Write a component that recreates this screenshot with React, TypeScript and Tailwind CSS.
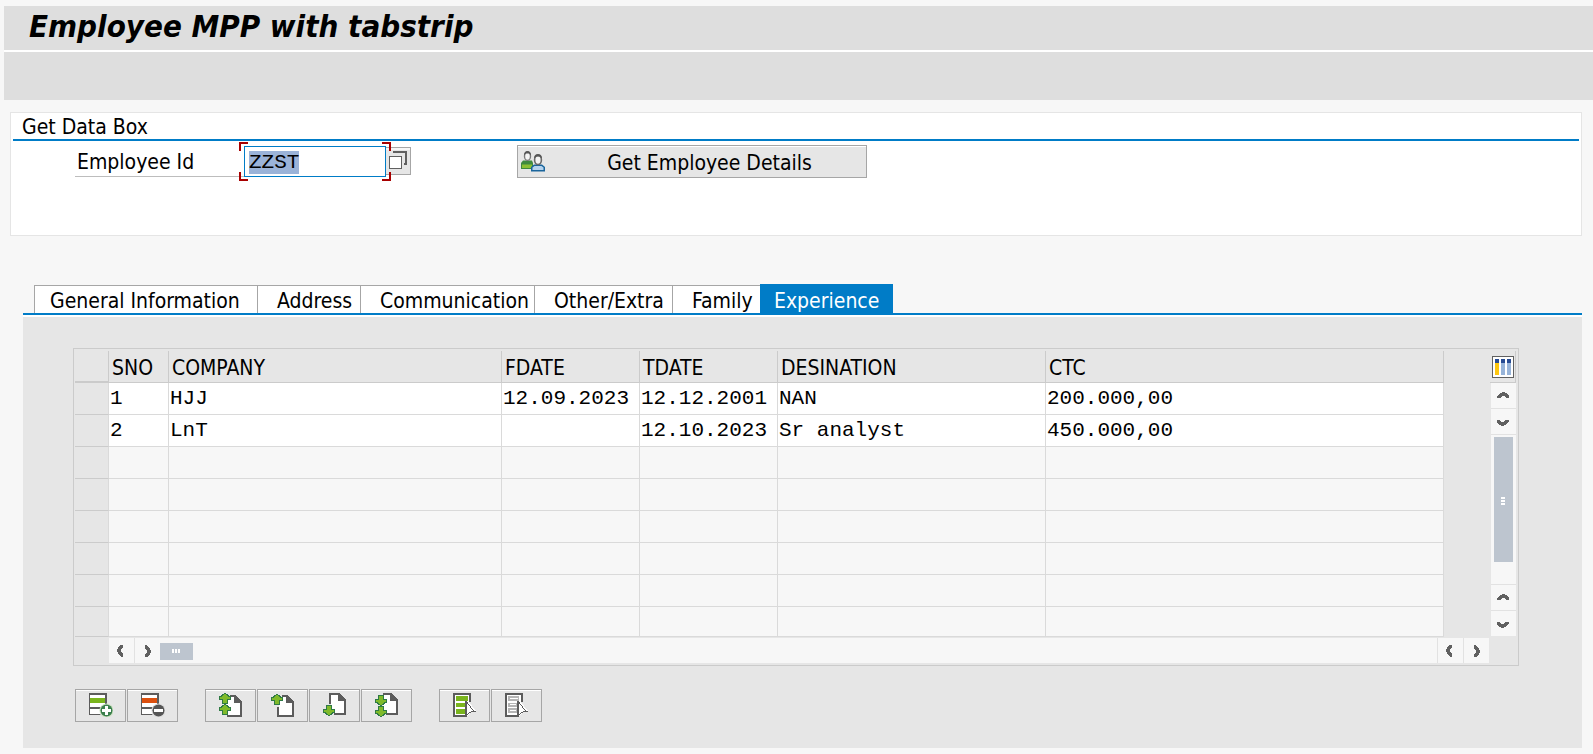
import React, { useEffect, useRef } from "react";

const tabs = [
  { name: "General Information", cls: "w-[223px] pl-[15px]" },
  { name: "Address", cls: "w-[103px] pl-[19px]" },
  { name: "Communication", cls: "w-[174px] pl-[19px]" },
  { name: "Other/Extra", cls: "w-[138px] pl-[19px]" },
  { name: "Family", cls: "w-[88px] pl-[19px]" },
];

const columns = [
  { name: "SNO", cls: "w-[60px]" },
  { name: "COMPANY", cls: "w-[333px]" },
  { name: "FDATE", cls: "w-[138px]" },
  { name: "TDATE", cls: "w-[138px]" },
  { name: "DESINATION", cls: "w-[268px]" },
  { name: "CTC", cls: "" },
];

const blank = ["", "", "", "", "", ""];

const rows: string[][] = [
  ["1", "HJJ", "12.09.2023", "12.12.2001", "NAN", "200.000,00"],
  ["2", "LnT", "", "12.10.2023", "Sr analyst", "450.000,00"],
  blank,
  blank,
  blank,
  blank,
  blank,
  blank,
];

function ScrollButton({ label, turn, cls }: { label: string; turn: string; cls: string }) {
  return (
    <button
      aria-label={label}
      className={"flex shrink-0 items-center justify-center border-[#e2e2e2] bg-[#f7f7f7] pr-px " + cls}
    >
      <svg viewBox="0 0 12 12" className={"h-3 w-3 " + turn} shapeRendering="crispEdges" fill="#606060">
        <path d="M5 2h3v1h2v1h1v1h1v3H9V7H8V6H5v1H4v1H0V6h1V5h1V4h1V3h2z" />
      </svg>
    </button>
  );
}

function PeopleIcon() {
  return (
    <svg viewBox="0 0 24 21" className="h-[21px] w-6 shrink-0">
      <path d="M0 12l2-2.500h9l1 2.500v6H0z" fill="#3f8a3f" />
      <path d="M1 13.500h10V17H1z" fill="#8bc034" />
      <ellipse cx="6.500" cy="5.200" rx="3" ry="4.200" fill="#f4f4f4" stroke="#7a7a7a" strokeWidth="1.400" />
      <path d="M3 4.500q0-4.500 3.500-4.500t3.500 4.500l-2-2h-3z" fill="#555" />
      <path d="M10 20.500v-4.500l3-2.500h8l3 2.500v4.500z" fill="#1a659c" />
      <path d="M11.500 19v-2.500l2-1.500h7l2 1.500v2.500z" fill="#b5d3ee" />
      <ellipse cx="17" cy="9" rx="3.400" ry="4.500" fill="#f4f4f4" stroke="#6a6a6a" strokeWidth="1.600" />
      <path d="M13 7.500q0-4.500 4-4.500t4 4.500l-2.500-2h-3z" fill="#555" />
    </svg>
  );
}

function RowIcon({ remove }: { remove?: boolean }) {
  return (
    <svg viewBox="0 0 24 24" className="h-6 w-6">
      <path d="M0 0h18v12l-7 10H0z" fill="#5c5c5c" />
      <path d="M1 2h15v12H1zM1 16h12v5H1z" fill="#fff" />
      <path d="M1 5h15v5H1z" fill={remove ? "#dc500f" : "#7ab51d"} />
      <circle cx="17.500" cy="17.500" r="7" fill={remove ? "#dcdcdc" : "#cfe3c4"} />
      <circle cx="17.500" cy="17.500" r="6" fill={remove ? "#555" : "#3b7f4d"} />
      {remove ? (
        <path d="M13 16h9v3h-9z" fill="#fff" />
      ) : (
        <path d="M16 13h3v3h3v3h-3v3h-3v-3h-3v-3h3z" fill="#fff" />
      )}
    </svg>
  );
}

function Arrow({ y, down }: { y: number; down?: boolean }) {
  return (
    <g transform={down ? `translate(0 ${y + 11}) scale(1 -1)` : `translate(0 ${y})`}>
      <path d="M5 0h2v1h2v1h1v1h2v4H9v4H3V7H0V3h2V2h1V1h2z" fill="#2f7a45" />
      <path d="M5 1h2v1h1v1h1v1h2v2H8v4H4V6H1V4h2V3h1V2h1z" fill="#7fba2a" />
    </g>
  );
}

function Sheet({ y }: { y: number }) {
  return (
    <g transform={`translate(0 ${y})`}>
      <path d="M6 0h10l7 7v15H6z" fill="#5c5c5c" />
      <path d="M8 2h7v6h6v12H8z" fill="#fff" />
    </g>
  );
}

function PageIcon({ kind }: { kind: "first" | "prev" | "next" | "last" }) {
  return (
    <svg viewBox="0 0 24 24" className="h-6 w-6" shapeRendering="crispEdges">
      <Sheet y={kind === "first" || kind === "prev" ? 2 : 0} />
      {kind === "first" && (
        <>
          <path d="M0 0h8v24H0zM8 0h3v5H8z" fill="#e6e6e6" />
          <path d="M8 5h4v17H8z" fill="#fff" />
          <Arrow y={0} />
          <Arrow y={11} />
        </>
      )}
      {kind === "prev" && (
        <>
          <path d="M0 0h11v5H0zM0 5h8v9H0z" fill="#e6e6e6" />
          <Arrow y={1} />
        </>
      )}
      {kind === "next" && (
        <>
          <path d="M0 11h8v13H0zM8 20h3v4H8z" fill="#e6e6e6" />
          <Arrow y={12} down />
        </>
      )}
      {kind === "last" && (
        <>
          <path d="M0 0h8v24H0zM8 20h3v4H8z" fill="#e6e6e6" />
          <Arrow y={2} down />
          <Arrow y={13} down />
        </>
      )}
    </svg>
  );
}

function SelectIcon({ all }: { all?: boolean }) {
  return (
    <svg viewBox="0 0 24 24" className="h-6 w-6" shapeRendering="crispEdges">
      <path d="M0 0h18v24H0z" fill="#5c5c5c" />
      <path d="M2 2h14v20H2z" fill="#fff" />
      {all ? (
        <path d="M3 3h12v5H3zM3 10h9v4H3zM3 16h9v5H3z" fill="#7ab51d" />
      ) : (
        <>
          <path d="M3 3h11v5H3zM3 10h9v4H3zM3 15h9v5H3z" fill="#b5b5b5" />
          <path d="M5 5h8v1H5zM5 11h6v1H5zM5 17h6v1H5z" fill="#fff" />
        </>
      )}
      <path d="M15 9h9v15H12v-2h3z" fill="#e6e6e6" />
      <path d="M14 8h1l8 10h-4l-5 5z" fill="#fff" />
      <path
        d="M12 8h2v16h-2zM14 9h1v2h-1zM15 11h1v1h-1zM16 12h1v1h-1zM17 13h1v2h-1zM18 15h1v1h-1zM19 16h1v1h-1zM20 17h1v1h-1zM18 18h5v1h-5zM16 19h2v1h-2zM15 20h1v1h-1zM14 21h1v1h-1z"
        fill="#5c5c5c"
      />
    </svg>
  );
}

function ToolButton({ label, children }: { label: string; children: React.ReactNode }) {
  return (
    <button
      aria-label={label}
      className="flex h-[33px] w-[51px] items-start border border-[#a6a6a6] bg-[#e6e6e6] pt-[3px] pl-[13px] shadow-[inset_0_1px_0_#fff]"
    >
      {children}
    </button>
  );
}

export default function App() {
  const employee = useRef<HTMLInputElement>(null);

  useEffect(() => {
    employee.current?.focus();
    employee.current?.select();
  }, []);

  return (
    <div className="min-h-screen bg-[#f7f7f7] pt-1.5 pb-1.5 font-['DejaVu_Sans_Condensed','DejaVu_Sans',sans-serif] text-[21px] leading-7 text-black">
      <header className="ml-1 bg-white">
        <div className="flex h-11 items-center bg-[#dedede] pb-1 pl-[25px]">
          <h1 className="text-[31px] leading-10 font-bold italic">Employee MPP with tabstrip</h1>
        </div>
        <div className="mt-0.5 h-12 bg-[#dedede]" />
      </header>

      <section className="mt-3 mr-[11px] ml-2.5 h-[124px] border border-[#e5e5e5] bg-white px-0.5">
        <h2 className="h-7 border-b-2 border-[#007cc7] pl-[9px]">Get Data Box</h2>
        <div className="flex items-start pt-1 pl-[62px]">
          <label htmlFor="employee" className="mt-px h-[31px] w-[169px] border-b border-[#bdbdbd] pt-0.5 pl-0.5">
            Employee Id
          </label>
          <div className="relative mt-px w-[142px]">
            <input
              ref={employee}
              id="employee"
              defaultValue="ZZST"
              className="block h-[31px] w-full border border-[#007cc7] bg-white pt-px pl-1 font-['Liberation_Mono',monospace] outline-none selection:bg-[#9bb3d8] selection:text-black"
            />
            <span className="absolute -top-1 -left-[5px] z-10 h-[9px] w-[9px] border-t-2 border-l-2 border-[#a80000]" />
            <span className="absolute -top-1 -right-[5px] z-10 h-[9px] w-[9px] border-t-2 border-r-2 border-[#a80000]" />
            <span className="absolute -bottom-1 -left-[5px] z-10 h-[9px] w-[9px] border-b-2 border-l-2 border-[#a80000]" />
            <span className="absolute -right-[5px] -bottom-1 z-10 h-[9px] w-[9px] border-r-2 border-b-2 border-[#a80000]" />
          </div>
          <button
            aria-label="Search help"
            className="mt-0.5 flex h-7 w-[25px] items-start border border-l-0 border-[#a6a6a6] bg-[#e6e6e6] pt-[3px] pl-[3px] shadow-[inset_0_2px_0_#f7f7f7]"
          >
            <svg viewBox="0 0 18 18" className="block h-[18px] w-[18px]" shapeRendering="crispEdges">
              <path d="M4 0h14v14h-3v-2h1V2H4z" fill="#606060" />
              <path d="M0 5h13v13H0z" fill="#606060" />
              <path d="M1 6h11v11H1z" fill="#fff" />
            </svg>
          </button>
          <button className="ml-[106px] flex h-[33px] w-[350px] items-center border border-[#a6a6a6] bg-[#e6e6e6] pl-[3px] shadow-[inset_0_1px_0_#fff]">
            <PeopleIcon />
            <span className="flex-1 pt-0.5 pl-2 text-center">Get Employee Details</span>
          </button>
        </div>
      </section>

      <main className="mt-12 mr-[11px] ml-[23px]">
        <div role="tablist" className="flex items-end border-b-2 border-[#007cc7] pl-[11px]">
          {tabs.map((tab) => (
            <button
              key={tab.name}
              role="tab"
              className={"h-7 border-t border-l border-[#a6a6a6] bg-white pt-px text-left whitespace-nowrap " + tab.cls}
            >
              {tab.name}
            </button>
          ))}
          <button role="tab" aria-selected="true" className="h-[29px] w-[133px] bg-[#007cc7] pt-[3px] pl-3.5 text-left text-white">
            Experience
          </button>
        </div>

        <div className="border-t-2 border-white bg-[#e6e6e6] pt-[31px] pr-[63px] pb-[26px] pl-[50px]">
          <div className="border border-[#cbcbcb] pt-0.5 pr-0.5 pb-0.5 pl-px">
            <div className="flex">
              <table className="flex-1 table-fixed border-separate border-spacing-0">
                <thead>
                  <tr className="h-8">
                    <th aria-label="Row" className="w-[34px] border-r border-b border-[#cbcbcb] p-0 shadow-[inset_0_-1px_0_#cbcbcb]" />
                    {columns.map((column) => (
                      <th
                        key={column.name}
                        className={"border-r border-b border-[#cbcbcb] p-0 pt-0.5 pl-[3px] text-left font-normal " + column.cls}
                      >
                        {column.name}
                      </th>
                    ))}
                  </tr>
                </thead>
                <tbody className="font-['Liberation_Mono',monospace]">
                  {rows.map((row, i) => (
                    <tr key={i} className={(i < 2 ? "bg-white" : "bg-[#f7f7f7]") + (i < 7 ? " h-8" : " h-[30px]")}>
                      <td className="border-r border-b border-r-[#dadada] border-b-[#cbcbcb] bg-[#e6e6e6] p-0" />
                      {row.map((cell, j) => (
                        <td key={j} className="overflow-hidden border-r border-b border-[#dadada] p-0 pt-px pl-px whitespace-nowrap">
                          {cell}
                        </td>
                      ))}
                    </tr>
                  ))}
                </tbody>
              </table>
              <div className="ml-[46px] flex w-[26px] flex-col pb-px">
                <div className="flex h-8 items-center justify-center border-r border-b border-[#cbcbcb]">
                  <button aria-label="Table settings">
                    <svg viewBox="0 0 22 22" className="block h-[22px] w-[22px]" shapeRendering="crispEdges">
                      <path d="M0 0h22v22H0z" fill="#606060" />
                      <path d="M1 1h20v20H1z" fill="#fff" />
                      <path d="M3 7h4v12H3z" fill="#fdc60f" />
                      <path d="M9 7h4v12H9zM15 7h4v12h-4z" fill="#97b4d9" />
                      <path d="M3 3h4v4H3zM9 3h4v4H9zM15 3h4v4h-4z" fill="#274b93" />
                    </svg>
                  </button>
                </div>
                <div className="ml-px flex flex-1 flex-col bg-[#f7f7f7]">
                  <ScrollButton label="Line up" turn="" cls="h-[26px] border-b" />
                  <ScrollButton label="Line down" turn="rotate-180" cls="h-[26px] border-b" />
                  <div className="flex flex-1 flex-col items-center pt-0.5">
                    <div className="flex h-[125px] w-[19px] flex-col items-center justify-center gap-px bg-[#bdc5cf] pt-0.5 pr-px">
                      <span className="h-0.5 w-1 bg-white" />
                      <span className="h-0.5 w-1 bg-white" />
                      <span className="h-0.5 w-1 bg-white" />
                    </div>
                  </div>
                  <ScrollButton label="Page up" turn="" cls="h-[26px] border-t" />
                  <ScrollButton label="Page down" turn="rotate-180" cls="h-[26px] border-t" />
                </div>
              </div>
            </div>
            <div className="mt-px mr-[27px] ml-[34px] flex h-[25px] items-stretch bg-[#f7f7f7]">
              <ScrollButton label="Column left" turn="-rotate-90" cls="w-[26px] border-r" />
              <ScrollButton label="Column right" turn="rotate-90" cls="w-[25px]" />
              <div className="flex flex-1 items-center pt-px">
                <div className="flex h-[17px] w-[33px] items-center justify-center gap-px bg-[#bdc5cf] pr-px">
                  <span className="h-1 w-0.5 bg-white" />
                  <span className="h-1 w-0.5 bg-white" />
                  <span className="h-1 w-0.5 bg-white" />
                </div>
              </div>
              <ScrollButton label="Page left" turn="-rotate-90" cls="w-[26px] border-l" />
              <ScrollButton label="Page right" turn="rotate-90" cls="w-[26px] border-l" />
            </div>
          </div>

          <div className="mt-[23px] ml-0.5 flex gap-[27px]">
            <div className="flex gap-px">
              <ToolButton label="Insert row"><RowIcon /></ToolButton>
              <ToolButton label="Delete row"><RowIcon remove /></ToolButton>
            </div>
            <div className="flex gap-px">
              <ToolButton label="First page"><PageIcon kind="first" /></ToolButton>
              <ToolButton label="Previous page"><PageIcon kind="prev" /></ToolButton>
              <ToolButton label="Next page"><PageIcon kind="next" /></ToolButton>
              <ToolButton label="Last page"><PageIcon kind="last" /></ToolButton>
            </div>
            <div className="flex gap-px">
              <ToolButton label="Select all"><SelectIcon all /></ToolButton>
              <ToolButton label="Deselect all"><SelectIcon /></ToolButton>
            </div>
          </div>
        </div>
      </main>
    </div>
  );
}
